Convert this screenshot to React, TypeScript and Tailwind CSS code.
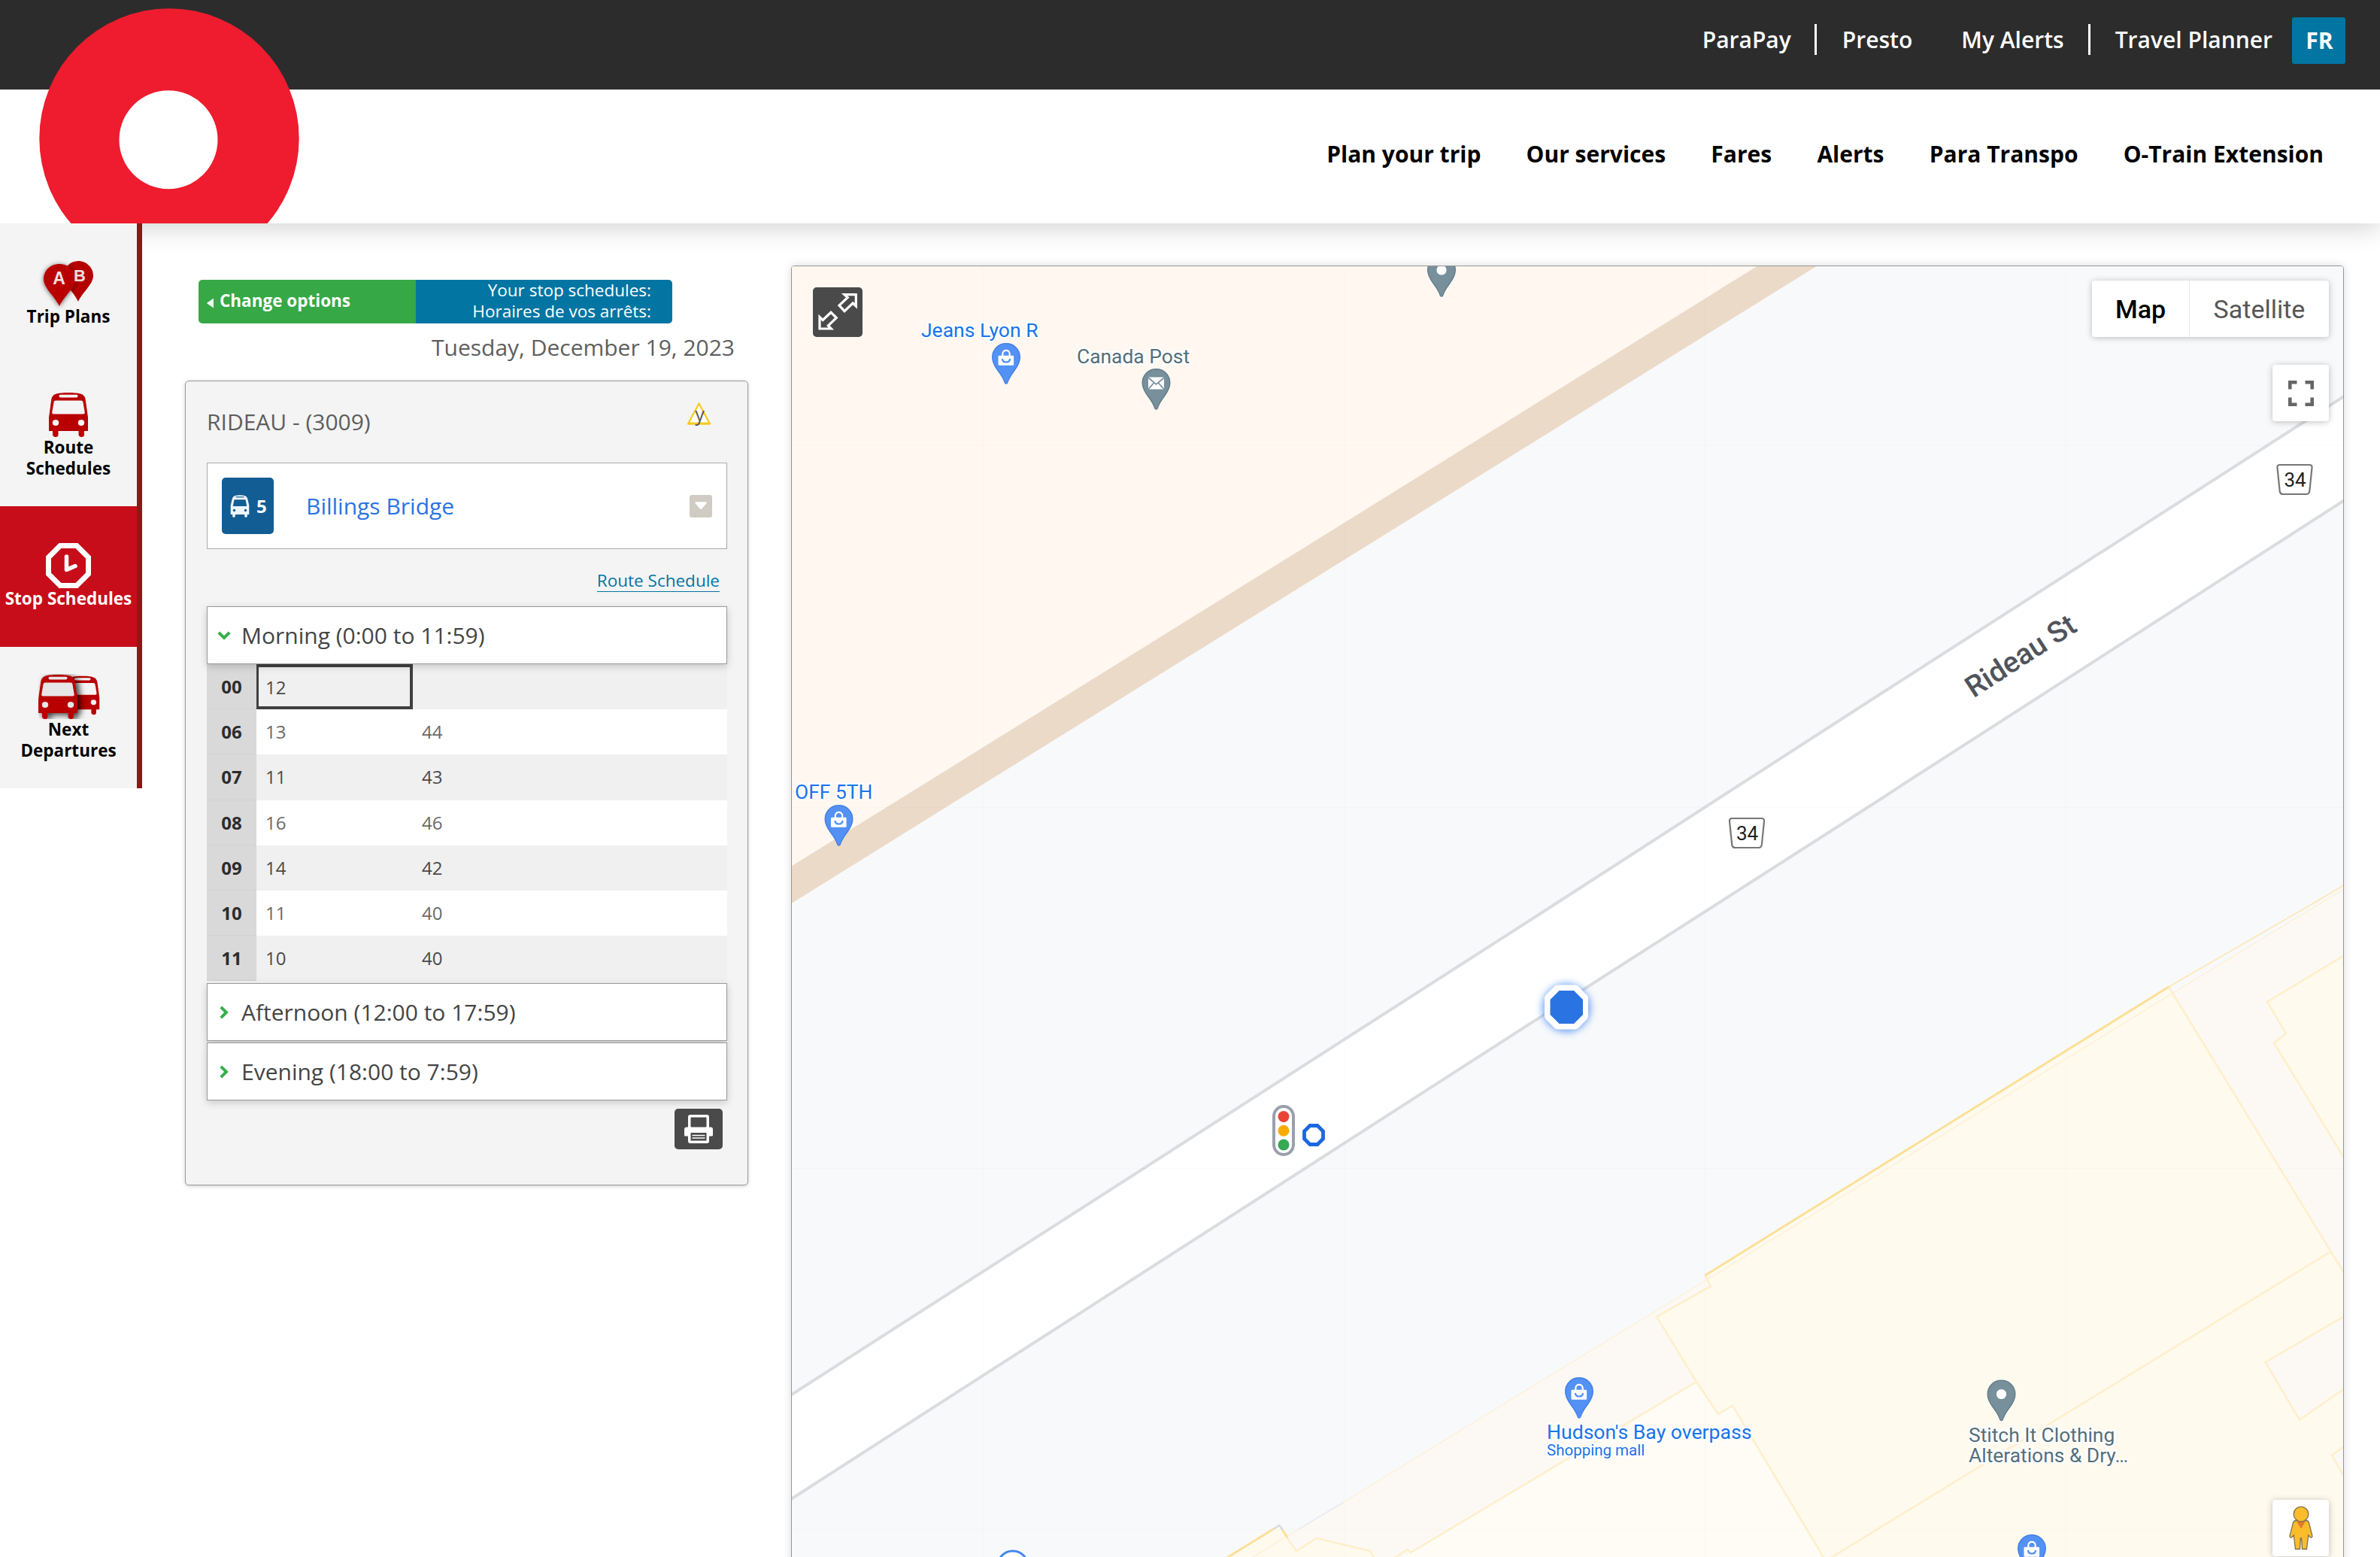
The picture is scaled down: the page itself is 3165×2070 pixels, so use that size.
import React from "react";

const SCHEDULE: { hour: string; times: string[] }[] = [
  { hour: "00", times: ["12"] },
  { hour: "06", times: ["13", "44"] },
  { hour: "07", times: ["11", "43"] },
  { hour: "08", times: ["16", "46"] },
  { hour: "09", times: ["14", "42"] },
  { hour: "10", times: ["11", "40"] },
  { hour: "11", times: ["10", "40"] },
];

const MAIN_NAV = ["Plan your trip", "Our services", "Fares", "Alerts", "Para Transpo", "O-Train Extension"];

/* ---------- icons ---------- */

function BusShape({ color, glass }: { color: string; glass: string }) {
  return (
    <g>
      <path
        d="M10 2.500C17 .5 35 .5 42 2.500C46 3.500 48 6 48.700 10L52 34V52H47V57Q47 60 43.500 60T39.500 57V52H12.500V57Q12.500 60 9 60T5 57V52H0V34L3.300 10C4 6 6 3.500 10 2.500Z"
        fill={color}
      />
      <rect x="13.500" y="3.800" width="25" height="3.600" rx="1.800" fill={glass} />
      <path d="M9 11.500H43Q45 11.500 45.400 13.500L47.700 27Q48 29.500 45.800 29.500H6.200Q4 29.500 4.300 27L6.600 13.500Q7 11.500 9 11.500Z" fill={glass} />
      <ellipse cx="9" cy="41" rx="4.200" ry="4" fill={glass} />
      <ellipse cx="43" cy="41" rx="4.200" ry="4" fill={glass} />
    </g>
  );
}

function TripPlansIcon() {
  return (
    <svg className="h-[60px] w-[68px] shrink-0 overflow-visible" viewBox="0 0 68 60">
      <defs>
        <filter id="pinShadow" x="-30%" y="-30%" width="160%" height="160%">
          <feDropShadow dx="0" dy="1" stdDeviation="3" floodColor="#000" floodOpacity="0.6" />
        </filter>
      </defs>
      <path d="M47 0C58 0 67 8.500 67 19.500C67 31 53 41 47 54C41 41 28 31 28 19.500C28 8.500 36 0 47 0Z" fill="#b40000" />
      <g filter="url(#pinShadow)">
        <path d="M22 4C34 4 43 12.500 43 24C43 36 28 47 22 60C16 47 1 36 1 24C1 12.500 10 4 22 4Z" fill="#b90000" />
      </g>
      <text x="21.500" y="31" textAnchor="middle" fontFamily="'Liberation Sans', sans-serif" fontWeight="700" fontSize="23" fill="#f2e2e2">A</text>
      <text x="49" y="26.500" textAnchor="middle" fontFamily="'Liberation Sans', sans-serif" fontWeight="700" fontSize="22" fill="#f0dcdc">B</text>
    </svg>
  );
}

function RouteIcon() {
  return (
    <svg className="h-[60px] w-[52px] shrink-0" viewBox="0 0 52 60">
      <BusShape color="#b90000" glass="#f4f4f4" />
    </svg>
  );
}

function StopClockIcon() {
  return (
    <svg className="h-[60px] w-[60px] shrink-0" viewBox="0 0 60 60">
      <path d="M19 3.500H41L56.500 19V41L41 56.500H19L3.500 41V19Z" fill="none" stroke="#fff" strokeWidth="7" />
      <path d="M27.500 18V35.500L39 30.500" fill="none" stroke="#fff" strokeWidth="5.500" strokeLinecap="round" strokeLinejoin="round" />
    </svg>
  );
}

function NextIcon() {
  return (
    <svg className="ml-[2px] h-[60px] w-[82px] shrink-0 overflow-hidden" viewBox="0 0 82 60">
      <defs>
        <filter id="busShadow" x="-20%" y="-20%" width="150%" height="150%">
          <feDropShadow dx="4" dy="2" stdDeviation="4" floodColor="#000" floodOpacity="0.8" />
        </filter>
      </defs>
      <g transform="translate(36 2) scale(.87)">
        <BusShape color="#b90000" glass="#f4f4f4" />
      </g>
      <g filter="url(#busShadow)">
        <BusShape color="#b90000" glass="#e6e6e6" />
      </g>
    </svg>
  );
}

function SmallBus() {
  return (
    <svg className="h-[30px] w-[26px] shrink-0" viewBox="0 0 26 30">
      <path
        d="M6.500 1Q13-.6 19.500 1Q22.500 1.800 23.200 5L25.300 14V26H22.800V28.500Q22.800 29.700 21 29.700T19.200 28.500V26H6.800V28.500Q6.800 29.700 5 29.700T3.200 28.500V26H.7V14L2.800 5Q3.500 1.800 6.500 1Z"
        fill="#eef4f9"
      />
      <path d="M7.500 2.800H18.500" stroke="#125d94" strokeWidth="1.200" />
      <path d="M5.500 6.200H20.500L22.300 15H3.700Z" fill="#125d94" />
      <circle cx="5.500" cy="20.500" r="1.700" fill="#125d94" />
      <circle cx="20.500" cy="20.500" r="1.700" fill="#125d94" />
    </svg>
  );
}

function PrintIcon() {
  return (
    <svg className="h-[38px] w-[38px]" viewBox="0 0 38 38">
      <path d="M8 0H30Q33 0 33 3V16.500H35Q38 16.500 38 19.500V27Q38 28.500 36.500 28.500H33V35Q33 38 30 38H8Q5 38 5 35V28.500H1.500Q0 28.500 0 27V19.500Q0 16.500 3 16.500H5V3Q5 0 8 0Z" fill="#fff" />
      <rect x="8.500" y="3.500" width="21" height="13" rx="1" fill="#4a4a4a" />
      <rect x="8.500" y="24" width="21" height="10.500" fill="#4a4a4a" />
      <path d="M10.500 27.500H27.500M10.500 31H27.500" stroke="#fff" strokeWidth="1.500" />
    </svg>
  );
}

function ExpandIcon() {
  return (
    <svg className="size-[66px]" viewBox="0 0 66 66" fill="none" stroke="#fff" strokeWidth="3.200" strokeLinejoin="miter">
      <path d="M42 9.700H57.300V25L53.200 21L42 31.700L35 24L46.200 13.500Z" />
      <path d="M9 55V39.500L13.200 43.500L24 33.300L31.300 40.500L20.300 51L24.300 55Z" />
    </svg>
  );
}

function ChevronDown() {
  return (
    <svg className="h-[12px] w-[18px] shrink-0" viewBox="0 0 18 12">
      <path d="M1.800 1.800L9 9L16.200 1.800" fill="none" stroke="#36b04a" strokeWidth="4" />
    </svg>
  );
}

function ChevronRight() {
  return (
    <svg className="h-[18px] w-[12px] shrink-0" viewBox="0 0 12 18">
      <path d="M1.800 1.800L9 9L1.800 16.200" fill="none" stroke="#36b04a" strokeWidth="4" />
    </svg>
  );
}

/* ---------- map ---------- */

const PIN = "M19 .7C8.700 .7 .7 8.700 .7 19C.7 26 3.500 30.500 8 36.500C12.500 42.500 15.500 46.500 17.200 52.600C17.700 54.400 20.300 54.400 20.800 52.600C22.500 46.500 25.500 42.500 30 36.500C34.500 30.500 37.300 26 37.300 19C37.300 8.700 29.300 .7 19 .7Z";

function Pin({ x, y, kind }: { x: number; y: number; kind: "shop" | "mail" | "dot" }) {
  const shop = kind === "shop";
  return (
    <g transform={`translate(${x - 19} ${y})`}>
      <path d={PIN} fill={shop ? "#5491f5" : "#78909c"} stroke={shop ? "#4280e8" : "#607d8b"} strokeWidth="1.400" />
      {kind === "dot" && <circle cx="19" cy="19" r="6.600" fill="#fff" />}
      {kind === "mail" && (
        <g>
          <rect x="8.500" y="11.500" width="21" height="16" rx="1.500" fill="#fff" />
          <path d="M9 12.500L19 21L29 12.500M9 27L16 19M29 27L22 19" fill="none" stroke="#78909c" strokeWidth="1.700" />
        </g>
      )}
      {shop && (
        <g>
          <path d="M14.300 17.500V14.500C14.300 8.300 23.700 8.300 23.700 14.500V17.500" fill="none" stroke="#fff" strokeWidth="2.200" />
          <rect x="8.500" y="16.800" width="20.600" height="13" rx="1.200" fill="#fff" />
          <path d="M13.800 21C14.500 27 23.500 27 24.200 21" fill="none" stroke="#5491f5" strokeWidth="2.200" />
        </g>
      )}
    </g>
  );
}

function Shield({ x, y }: { x: number; y: number }) {
  return (
    <g transform={`translate(${x} ${y})`}>
      <path d="M-19.500 -19.500H19.500Q23.500 -19.500 23 -15.500L19.800 15.500Q19.300 19.500 15.500 19.500H-15.500Q-19.300 19.500 -19.800 15.500L-23 -15.500Q-23.500 -19.500 -19.500 -19.500Z" fill="#fff" stroke="#777" strokeWidth="2.200" />
      <text x="0.500" y="9.500" textAnchor="middle" fontSize="26" fill="#222">34</text>
    </g>
  );
}

function MapLabel({ x, y, size = 26, color, children }: { x: number; y: number; size?: number; color: string; children: string }) {
  return (
    <text x={x} y={y} fontSize={size} fill={color} stroke="#fff" strokeWidth="5" strokeLinejoin="round" paintOrder="stroke">
      {children}
    </text>
  );
}

function MapCanvas() {
  const blue = "#1a73e8";
  const slate = "#546e7a";
  return (
    <svg className="block h-[1717px] w-[2063px]" viewBox="1053 354 2063 1717" fontFamily="Roboto, sans-serif">
      <defs>
        <filter id="glow" x="-50%" y="-50%" width="200%" height="200%">
          <feGaussianBlur stdDeviation="5" />
        </filter>
      </defs>
      <rect x="1050" y="350" width="2070" height="1725" fill="#f8f9fb" />

      {/* block north of the street */}
      <path d="M1050 350H2343L1050 1153Z" fill="#fff7f0" />
      <path d="M2343 350H2422L2040 587.500L1050 1202.500V1153L1231 1041L2040 538Z" fill="#ecdac8" />

      {/* blocks south of the street */}
      <path d="M3120 1180L2890 1320L2269 1702L2040 1842L1787 1997L1666 2072H3120Z" fill="#fcf9f5" />
      <path d="M2256 1837L2000 1990L1876 2064L1862 2072H2430L2304 1868.700L2285 1880Z" fill="#fffcf6" />
      <path d="M1630 2072L1702 2028L1711 2043.500L1724 2062L1750.500 2045L1822 2062L1828 2072Z" fill="#fffaee" />
      <path d="M2884 1312L2267.500 1695.600L2275 1710L2203 1750.500L2256 1837L2285 1880L2304 1868.700L2426 2072H3120V1697Z" fill="#fffaee" />
      <path d="M3120 1268.500L3015 1332L3040 1374L3024 1386.500L3120 1544Z" fill="#fffaee" />
      <path d="M3120 1748.500L3012.600 1811L3058 1887.600L3120 1844.500Z" fill="#fcf9f5" />
      <path d="M3120 1921.500L3101 1934.700L3120 1967Z" fill="#fcf9f5" />
      <g fill="none" stroke="#feefcb" strokeWidth="2.600">
        <path d="M2884 1312L3120 1697" />
        <path d="M2267.500 1695.600L2275 1710L2203 1750.500L2256 1837L2285 1880L2304 1868.700L2426 2072" />
        <path d="M2256 1837L2000 1990L1876 2064L1872 2060L1853 2072" />
        <path d="M2433 2072L3099.500 1664" />
        <path d="M3120 1268.500L3015 1332L3040 1374L3024 1386.500L3120 1544" />
        <path d="M3120 1748.500L3012.600 1811L3058 1887.600L3120 1844.500" />
        <path d="M3120 1921.500L3101 1934.700L3120 1967" />
        <path d="M1711 2043.500L1724 2062L1750.500 2045L1822 2062L1828 2072" />
      </g>
      <path d="M3120 1180L2890 1320L2269 1702L2040 1842L1787 1997M1727 2033L1666 2070" fill="none" stroke="#feefd2" strokeWidth="1.300" />
      <path d="M1787 1997L1727 2033" fill="none" stroke="#e4e5e8" strokeWidth="1.300" />
      <path d="M2884 1312L3078 1200L3120 1175" fill="none" stroke="#fee6ae" strokeWidth="1.600" />
      <path d="M2884 1312L2267.500 1695.600M1630 2072L1693 2033M1705 2033.500L1712 2044" fill="none" stroke="#fddf93" strokeWidth="2.800" />
      <path d="M1693 2033L1701.500 2028L1705.500 2034" fill="none" stroke="#dadce0" strokeWidth="2.600" />

      {/* Rideau Street */}
      <path d="M1048 1857L2040 1220L2500 923L3120 525V663.500L2536 1039.400L2500 1063L2040 1357.600L1048 1995.500Z" fill="#fff" stroke="#dadce0" strokeWidth="4" />

      {/* tile seams */}
      <path
        d="M1307 350V2075M1787.500 350V2075M2267.500 350V2075M2747.500 350V2075M1050 592.500H3120M1050 1073.500H3120M1050 1553.500H3120M1050 2033.500H3120"
        stroke="#000"
        strokeOpacity="0.014"
        strokeWidth="1"
      />

      <text transform="translate(2624.500 928.500) rotate(-33)" fontSize="39" fontWeight="500" fill="#50545b" stroke="#fff" strokeWidth="4" paintOrder="stroke">
        Rideau St
      </text>
      <Shield x={3051.5} y={637.5} />
      <Shield x={2323} y={1107.5} />

      <Pin x={1338} y={456} kind="shop" />
      <Pin x={1537.5} y={490} kind="mail" />
      <Pin x={1917} y={340} kind="dot" />
      <Pin x={1115.5} y={1070} kind="shop" />
      <Pin x={2100} y={1831} kind="shop" />
      <Pin x={2661.5} y={1834.5} kind="dot" />
      <Pin x={2702} y={2040} kind="shop" />

      <MapLabel x={1225} y={448} size={26.5} color={blue}>Jeans Lyon R</MapLabel>
      <MapLabel x={1432} y={483} size={26.4} color={slate}>Canada Post</MapLabel>
      <MapLabel x={1057} y={1062} size={26.4} color={blue}>OFF 5TH</MapLabel>
      <MapLabel x={2057} y={1913} size={26.6} color={blue}>Hudson's Bay overpass</MapLabel>
      <MapLabel x={2057} y={1935} size={20.5} color={blue}>Shopping mall</MapLabel>
      <MapLabel x={2618} y={1917} size={26.4} color={slate}>Stitch It Clothing</MapLabel>
      <MapLabel x={2618} y={1943.5} size={26.4} color={slate}>Alterations & Dry…</MapLabel>

      {/* traffic light */}
      <rect x="1694" y="1471" width="26" height="64" rx="13" fill="#fff" stroke="#9aa0ab" strokeWidth="4" />
      <circle cx="1707" cy="1484.500" r="7.500" fill="#ea4335" />
      <circle cx="1707" cy="1503.300" r="7.500" fill="#f9ab00" />
      <circle cx="1707" cy="1522" r="7.500" fill="#34a853" />

      {/* bus stops */}
      <path d="M1742 1496.500H1752L1759.500 1504V1514L1752 1521.500H1742L1734.500 1514V1504Z" fill="#fff" stroke="#1b67e0" strokeWidth="4.800" />
      <circle cx="2083" cy="1340" r="33" fill="#4285f4" fillOpacity="0.65" filter="url(#glow)" />
      <path d="M2072 1309.500H2094Q2097 1309.500 2099 1311.500L2110 1322.500Q2112 1324.500 2112 1327.500V1350.500Q2112 1353.500 2110 1355.500L2099 1366.500Q2097 1368.500 2094 1368.500H2072Q2069 1368.500 2067 1366.500L2056 1355.500Q2054 1353.500 2054 1350.500V1327.500Q2054 1324.500 2056 1322.500L2067 1311.500Q2069 1309.500 2072 1309.500Z" fill="#fff" />
      <path d="M2073.500 1317H2093L2105 1329V1349L2093 1361H2073.500L2061.500 1349V1329Z" fill="#2a73e2" />
      <circle cx="1346.800" cy="2082" r="20" fill="#fff" stroke="#4388ee" strokeWidth="3" />
    </svg>
  );
}

function Pegman() {
  return (
    <svg className="h-[60px] w-[34px]" viewBox="0 0 34 60">
      <path d="M10.500 19.500H23.500Q26.500 19.500 27.500 22.500L32 40Q32 42.500 29.500 42L26.500 39V41L24.500 57.500H18.500L17.600 43H16.400L15.500 57.500H9.500L7.500 41V39L4.500 42Q2 42.500 2 40L6.500 22.500Q7.500 19.500 10.500 19.500Z" fill="#fbbc2b" stroke="#7d7250" strokeWidth="1.300" />
      <path d="M11 20.500H23L17 30.500Z" fill="#e07a2d" />
      <circle cx="17" cy="11" r="9.800" fill="#fbbc2b" stroke="#7d7250" strokeWidth="1.300" />
    </svg>
  );
}

function MapPanel() {
  return (
    <section className="relative mt-[56px] ml-[57px] h-[1730px] w-[2065px] overflow-hidden rounded-[4px] border border-[#969696] shadow-[0_0_12px_rgba(0,0,0,0.14)]">
      <MapCanvas />
      <button className="absolute top-[28px] left-[28px] size-[66px] rounded-[5px] bg-[#4a4a4a]">
        <ExpandIcon />
      </button>
      <div className="absolute top-[19px] right-[19px] flex h-[75px] w-[315px] rounded-[4px] bg-white font-[Roboto,sans-serif] text-[34px] leading-[76px] shadow-[0_1px_8px_rgba(0,0,0,0.25)]">
        <button className="w-[130px] border-r border-[#e8e8e8] text-center font-medium text-black">Map</button>
        <button className="flex-1 text-center text-[#565656]">Satellite</button>
      </div>
      <button className="absolute top-[131px] right-[19px] flex size-[75px] items-center justify-center rounded-[4px] bg-white shadow-[0_1px_8px_rgba(0,0,0,0.25)]">
        <svg className="size-[34px]" viewBox="0 0 34 34" fill="none" stroke="#666" strokeWidth="4.600">
          <path d="M2.300 11.500V2.300H11.500M22.500 2.300H31.700V11.500M31.700 22.500V31.700H22.500M11.500 31.700H2.300V22.500" />
        </svg>
      </button>
      <button className="absolute top-[1640px] right-[19px] flex size-[75px] items-center justify-center rounded-[4px] bg-white shadow-[0_1px_8px_rgba(0,0,0,0.25)]">
        <Pegman />
      </button>
    </section>
  );
}

/* ---------- page parts ---------- */

function Header() {
  return (
    <header className="relative z-10 h-[297px] overflow-visible bg-white shadow-[0_8px_30px_rgba(0,0,0,0.16)]">
      <div className="flex h-[119px] items-start justify-end bg-[#2c2c2c] pr-[46px] text-[30px] leading-[40px] font-semibold text-white">
        <a className="mt-[33px]">ParaPay</a>
        <i className="mt-[32px] mr-[34px] ml-[31px] h-[41px] w-[3px] bg-white" />
        <a className="mt-[33px]">Presto</a>
        <a className="mt-[33px] ml-[65px]">My Alerts</a>
        <i className="mt-[32px] mr-[33px] ml-[32px] h-[41px] w-[3px] bg-white" />
        <a className="mt-[33px]">Travel Planner</a>
        <a className="mt-[23px] ml-[26px] flex h-[62px] w-[71px] items-center justify-center rounded-[3px] bg-[#0275a3] pl-[2px] font-bold">FR</a>
      </div>
      <nav className="flex h-[178px] items-start justify-end gap-[60.200px] pt-[66px] pr-[75px] text-[30px] leading-[40px] font-bold text-black">
        {MAIN_NAV.map((label) => (
          <a key={label}>{label}</a>
        ))}
      </nav>
      <svg className="absolute top-0 left-[40px] h-[297px] w-[370px]" viewBox="40 0 370 297">
        <circle cx="225" cy="184" r="172.700" fill="#ee1c2e" />
        <circle cx="224" cy="185.800" r="65.500" fill="#fff" />
      </svg>
    </header>
  );
}

function SideItem({ icon, lines, active = false }: { icon: React.ReactNode; lines: string[]; active?: boolean }) {
  return (
    <a
      className={
        active
          ? "flex h-[187.500px] flex-col items-center justify-center bg-[#c70d19] text-white"
          : "flex h-[187.500px] flex-col items-center justify-center text-black"
      }
    >
      {icon}
      {lines.map((line) => (
        <span key={line} className="block whitespace-nowrap">
          {line}
        </span>
      ))}
    </a>
  );
}

function Sidebar() {
  return (
    <aside className="relative z-20 h-[751px] w-[189px] shrink-0 border-r-[7px] border-[#8c1717] bg-[#f4f4f4] pt-[0.500px] text-[22.500px] leading-[28px] font-bold">
      <SideItem icon={<TripPlansIcon />} lines={["Trip Plans"]} />
      <SideItem icon={<RouteIcon />} lines={["Route", "Schedules"]} />
      <SideItem icon={<StopClockIcon />} lines={["Stop Schedules"]} active />
      <SideItem icon={<NextIcon />} lines={["Next", "Departures"]} />
    </aside>
  );
}

function PeriodHeader({ open = false, children }: { open?: boolean; children: string }) {
  return (
    <button className="relative flex h-[77px] w-full items-center border border-[#999] bg-white text-left text-[30px] leading-[40px] text-[#444] shadow-[0_3px_10px_rgba(0,0,0,0.18)]">
      <span className="mr-[5px] ml-[4px] flex w-[36px] items-center justify-center">{open ? <ChevronDown /> : <ChevronRight />}</span>
      {children}
    </button>
  );
}

function TimeTable() {
  return (
    <div className="mb-[3px] text-[24px] leading-[60px]">
      {SCHEDULE.map((row, r) => (
        <div key={row.hour} className={r % 2 === 0 ? "flex h-[60.200px] bg-[#f0f0f0] text-[#4a4a4a]" : "flex h-[60.200px] bg-white text-[#6a6a6a]"}>
          <div className="w-[66px] border-b border-[#d2d2d2] bg-[#d9d9d9] text-center font-bold text-[#2c2c2c]">{row.hour}</div>
          {row.times.map((time, c) => (
            <div
              key={c}
              className={
                r === 0
                  ? "w-[208px] border-[4px] border-l-[3px] border-[#404040] pl-[9px] leading-[53px]"
                  : "w-[208px] pl-[12px]"
              }
            >
              {time}
            </div>
          ))}
        </div>
      ))}
    </div>
  );
}

function SchedulePanel() {
  return (
    <section className="ml-[57px] w-[749px] shrink-0 pt-[75px]">
      <div className="ml-[18px] flex h-[58px] w-[630px] text-white">
        <button className="flex w-[289px] items-center rounded-l-[5px] bg-[#36a846] pl-[10px] text-[22.500px] font-bold">
          <svg className="mt-[3px] mr-[7px] h-[16px] w-[11px]" viewBox="0 0 11 16">
            <path d="M10 1.500V14.500L.8 8Z" fill="#eefaf0" />
          </svg>
          <span className="pb-[2px]">Change options</span>
        </button>
        <div className="flex-1 rounded-r-[5px] bg-[#0275a3] pr-[28px] text-right text-[22.500px] leading-[28px]">
          <p>Your stop schedules:</p>
          <p>Horaires de vos arrêts:</p>
        </div>
      </div>
      <p className="mt-[12px] mr-[18px] text-right text-[30px] leading-[40px] text-[#5e5e5e]">Tuesday, December 19, 2023</p>

      <div className="mt-[24px] h-[1070px] rounded-[5px] border border-[#999] bg-[#f4f4f4] px-[28px] shadow-[0_1px_5px_rgba(0,0,0,0.2)]">
        <div className="flex h-[108px] justify-between">
          <h2 className="pt-[34px] text-[30px] leading-[40px] text-[#5e5e5e]">RIDEAU - (3009)</h2>
          <div className="relative mt-[28px] mr-[21px] h-[30px] w-[31px]">
            <svg className="h-[30px] w-[31px]" viewBox="0 0 31 30">
              <path d="M15.500 1.500L30 28.500H1Z" fill="#fff" stroke="#f5ca1d" strokeWidth="2.200" strokeLinejoin="round" />
              <path d="M1 28H30" stroke="#f5ca1d" strokeWidth="3" />
            </svg>
            <span className="absolute top-[2px] left-[1px] w-[31px] text-center text-[25px] leading-[26px] text-[#555]">y</span>
          </div>
        </div>

        <div className="flex h-[115px] w-[692px] items-center border border-[#aaa] bg-white pl-[19px]">
          <div className="flex h-[75px] w-[69px] items-center gap-[9px] rounded-[5px] bg-[#125d94] pl-[11px] text-[24px] font-bold text-white">
            <SmallBus />
            <span>5</span>
          </div>
          <a className="ml-[43px] flex-1 text-[30px] leading-[40px] text-[#2a73e2]">Billings Bridge</a>
          <svg className="mr-[19px] size-[30px]" viewBox="0 0 30 30">
            <rect width="30" height="30" rx="3" fill="#d0ccc3" />
            <path d="M8.500 10.500H21.500L15 18Z" fill="#fff" stroke="#fff" strokeWidth="2.400" strokeLinejoin="round" />
          </svg>
        </div>

        <div className="flex h-[76px] w-[692px] justify-end pr-[10px]">
          <a className="mt-[26px] h-[31px] border-b border-[#0275a3] text-[22.500px] leading-[31px] text-[#0275a3]">Route Schedule</a>
        </div>

        <div className="w-[692px]">
          <PeriodHeader open>Morning (0:00 to 11:59)</PeriodHeader>
          <TimeTable />
          <PeriodHeader>Afternoon (12:00 to 17:59)</PeriodHeader>
          <div className="h-[2px]" />
          <PeriodHeader>Evening (18:00 to 7:59)</PeriodHeader>
          <div className="mt-[11px] flex justify-end pr-[6px]">
            <button className="flex h-[54px] w-[64px] items-center justify-center rounded-[5px] bg-[#4a4a4a]">
              <PrintIcon />
            </button>
          </div>
        </div>
      </div>
    </section>
  );
}

export default function App() {
  return (
    <div className="h-[2070px] w-[3165px] overflow-hidden bg-white font-['Open_Sans',sans-serif]">
      <Header />
      <main className="flex items-start">
        <Sidebar />
        <SchedulePanel />
        <MapPanel />
      </main>
    </div>
  );
}
